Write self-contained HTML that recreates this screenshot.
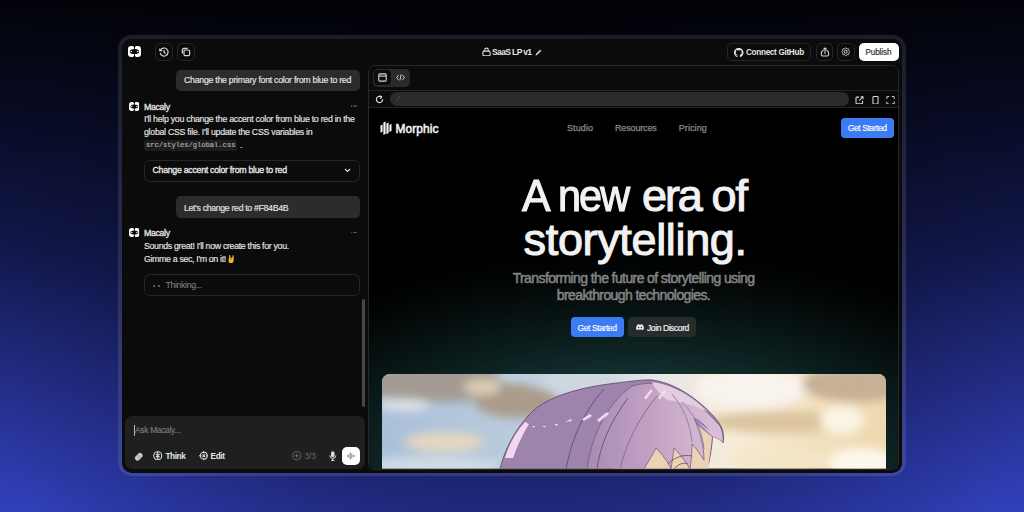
<!DOCTYPE html>
<html><head><meta charset="utf-8">
<style>
*{box-sizing:border-box;margin:0;padding:0}
html,body{width:1024px;height:512px;overflow:hidden}
body{position:relative;font-family:"Liberation Sans",sans-serif;
background:radial-gradient(ellipse 560px 520px at 512px 240px,rgba(0,0,0,.55) 0%,rgba(0,0,0,.3) 50%,rgba(0,0,0,0) 100%),radial-gradient(ellipse 300px 260px at 0px 512px,rgba(60,78,210,.3),rgba(60,78,210,0)),radial-gradient(ellipse 300px 260px at 1024px 512px,rgba(60,78,210,.3),rgba(60,78,210,0)),linear-gradient(180deg,#020308 0px,#080b24 110px,#131950 250px,#212b84 400px,#2c3aae 512px);}
.a{position:absolute}
#frame{left:118px;top:35px;width:788px;height:441px;border-radius:14px;border:4px solid rgba(255,255,255,.1);border-bottom-width:3px}
#inner{left:122px;top:39px;width:780px;height:434px;border-radius:10px;background:#0b0b0b;overflow:hidden}
.t{white-space:nowrap;line-height:1}
.ib{border:1px solid #262626;border-radius:5px}
.bub{background:#2c2c2c;border-radius:5px}
.h1{font-size:45px;color:#f2f2f2;letter-spacing:-2.1px;-webkit-text-stroke:1.1px #f2f2f2}
.txt{color:#e6e6e6;font-size:8.8px;-webkit-text-stroke:0.15px #e6e6e6}
</style></head><body>
<svg width="0" height="0" style="position:absolute"><defs>
<mask id="lm" maskUnits="userSpaceOnUse" x="0" y="0" width="13" height="11"><rect width="13" height="11" fill="#fff"/>
  <rect x="6.05" y="0" width="0.9" height="11" fill="#000"/>
  <ellipse cx="6.5" cy="5.5" rx="4.7" ry="2.6" fill="#000"/>
  <path d="M5.1 0 h2.8 l-1.4 2z M5.1 11 h2.8 l-1.4 -2z" fill="#000"/>
</mask>
<symbol id="logo" viewBox="0 0 13 11"><rect x="0" y="0" width="13" height="11" rx="3.2" fill="#fff" mask="url(#lm)"/>
  <circle cx="3.4" cy="5.5" r="0.8" fill="#fff"/><circle cx="9.6" cy="5.5" r="0.8" fill="#fff"/></symbol>
</defs></svg>
<div class="a" id="frame"></div>
<div class="a" id="inner"></div>

<!-- header -->
<svg class="a" style="left:128px;top:46px" width="13" height="11"><use href="#logo"/></svg>
<div class="a ib" style="left:155px;top:43px;width:18px;height:18px"></div>
<svg class="a" style="left:159px;top:47px" width="10" height="10" viewBox="0 0 10 10" fill="none" stroke="#d8d8d8" stroke-width="1.2"><path d="M1.5 3.2A4 4 0 1 1 1.2 6"/><path d="M5 3v2.2l1.6 1.2"/><path d="M0.8 1.5v2.2h2.2"/></svg>
<div class="a ib" style="left:177px;top:43px;width:18px;height:18px"></div>
<svg class="a" style="left:181px;top:47px" width="10" height="10" viewBox="0 0 10 10" fill="none" stroke="#d8d8d8" stroke-width="1.2"><rect x="3" y="3" width="5.6" height="5.6" rx="1.2"/><path d="M6.6 1.4h-3.6a1.6 1.6 0 0 0-1.6 1.6v3.6"/></svg>

<svg class="a" style="left:481.5px;top:46.5px" width="9" height="9.5" viewBox="0 0 9 9.5" fill="none" stroke="#dedede" stroke-width="1.1"><rect x="0.9" y="4.1" width="7.2" height="4.8" rx="1.1"/><path d="M2.7 4.1V2.9a1.8 1.8 0 0 1 3.6 0v1.2"/></svg>
<div class="a t" style="left:492px;top:47.8px;font-size:8.5px;font-weight:bold;color:#e4e4e4;letter-spacing:-0.62px">SaaS LP v1</div>
<svg class="a" style="left:535px;top:48.5px" width="7" height="7" viewBox="0 0 7 7"><path d="M0.6 6.4l0.3-1.4 3.9-3.9 1.1 1.1-3.9 3.9z" fill="#dcdcdc"/><path d="M5.2 0.7l1.1 1.1" stroke="#dcdcdc" stroke-width="0.9"/></svg>

<div class="a ib" style="left:727px;top:43px;width:84px;height:18px"></div>
<svg class="a" style="left:734px;top:47.5px" width="9.5" height="9.5" viewBox="0 0 16 16"><path fill="#e8e8e8" d="M8 0C3.58 0 0 3.58 0 8c0 3.54 2.29 6.53 5.47 7.59.4.07.55-.17.55-.38 0-.19-.01-.82-.01-1.49-2.01.37-2.53-.49-2.69-.94-.09-.23-.48-.94-.82-1.13-.28-.15-.68-.52-.01-.53.63-.01 1.08.58 1.23.82.72 1.21 1.87.87 2.33.66.07-.52.28-.87.51-1.07-1.78-.2-3.64-.89-3.640-3.95 0-.87.31-1.59.82-2.15-.08-.2-.36-1.02.08-2.12 0 0 .67-.21 2.2.82.64-.18 1.32-.27 2-.27.68 0 1.36.09 2 .27 1.53-1.04 2.200-.82 2.2-.82.44 1.1.16 1.92.08 2.12.51.56.82 1.27.82 2.15 0 3.07-1.87 3.75-3.65 3.95.29.25.54.73.54 1.48 0 1.07-.01 1.93-.01 2.2 0 .21.15.46.55.38A8.013 8.013 0 0016 8c0-4.42-3.58-8-8-8z"/></svg>
<div class="a t" style="left:746px;top:49.3px;font-size:8.2px;font-weight:bold;color:#e4e4e4;letter-spacing:-0.32px">Connect GitHub</div>
<div class="a ib" style="left:815.5px;top:43px;width:17.5px;height:18px"></div>
<svg class="a" style="left:819.5px;top:46.8px" width="10" height="10" viewBox="0 0 10 10" fill="none" stroke="#d4d4d4" stroke-width="1.05" stroke-linecap="round" stroke-linejoin="round"><path d="M3.2 3.4L1.4 4.9V7.7a1.2 1.2 0 0 0 1.2 1.2h4.8a1.2 1.2 0 0 0 1.2-1.2V4.9L6.8 3.4"/><path d="M5 6.6V0.8M3.7 2.1L5 0.8 6.3 2.1"/></svg>
<div class="a ib" style="left:837.3px;top:43px;width:17.5px;height:18px"></div>
<svg class="a" style="left:841px;top:47px" width="9.5" height="9.5" viewBox="0 0 9.5 9.5" fill="none" stroke="#d4d4d4" stroke-width="1"><path d="M4.75 0.75 L5.01 0.82 L5.24 1.01 L5.44 1.27 L5.61 1.54 L5.77 1.76 L5.94 1.89 L6.15 1.92 L6.41 1.87 L6.72 1.80 L7.05 1.76 L7.35 1.79 L7.58 1.92 L7.71 2.15 L7.74 2.45 L7.70 2.78 L7.63 3.09 L7.58 3.35 L7.61 3.56 L7.74 3.73 L7.96 3.89 L8.23 4.06 L8.49 4.26 L8.68 4.49 L8.75 4.75 L8.68 5.01 L8.49 5.24 L8.23 5.44 L7.96 5.61 L7.74 5.77 L7.61 5.94 L7.58 6.15 L7.63 6.41 L7.70 6.72 L7.74 7.05 L7.71 7.35 L7.58 7.58 L7.35 7.71 L7.05 7.74 L6.72 7.70 L6.41 7.63 L6.15 7.58 L5.94 7.61 L5.77 7.74 L5.61 7.96 L5.44 8.23 L5.24 8.49 L5.01 8.68 L4.75 8.75 L4.49 8.68 L4.26 8.49 L4.06 8.23 L3.89 7.96 L3.73 7.74 L3.56 7.61 L3.35 7.58 L3.09 7.63 L2.78 7.70 L2.45 7.74 L2.15 7.71 L1.92 7.58 L1.79 7.35 L1.76 7.05 L1.80 6.72 L1.87 6.41 L1.92 6.15 L1.89 5.94 L1.76 5.77 L1.54 5.61 L1.27 5.44 L1.01 5.24 L0.82 5.01 L0.75 4.75 L0.82 4.49 L1.01 4.26 L1.27 4.06 L1.54 3.89 L1.76 3.73 L1.89 3.56 L1.92 3.35 L1.87 3.09 L1.80 2.78 L1.76 2.45 L1.79 2.15 L1.92 1.92 L2.15 1.79 L2.45 1.76 L2.78 1.80 L3.09 1.87 L3.35 1.92 L3.56 1.89 L3.73 1.76 L3.89 1.54 L4.06 1.27 L4.26 1.01 L4.49 0.82 L4.75 0.75z"/><circle cx="4.75" cy="4.75" r="1.5"/></svg>
<div class="a" style="left:859px;top:42.5px;width:40px;height:18.5px;background:#fff;border-radius:5px"></div>
<div class="a t" style="left:865.5px;top:49.2px;font-size:8.2px;color:#333;letter-spacing:-0.15px;-webkit-text-stroke:0.2px #333">Publish</div>

<!-- chat -->
<div class="a bub" style="left:175.5px;top:69.5px;width:184.5px;height:21.5px"></div>
<div class="a t txt" style="left:184px;top:76.2px;letter-spacing:-0.28px">Change the primary font color from blue to red</div>

<svg class="a" style="left:129.2px;top:102px" width="10.6" height="9" viewBox="0 0 13 11"><use href="#logo"/></svg>
<div class="a t" style="left:144px;top:102.6px;font-size:8.8px;color:#e8e8e8;letter-spacing:-0.35px;-webkit-text-stroke:0.3px #e8e8e8">Macaly</div>
<div class="a" style="left:350.6px;top:105.2px;width:1.6px;height:1.6px;border-radius:1px;background:#5a5a5a"></div><div class="a" style="left:353.0px;top:105.2px;width:1.6px;height:1.6px;border-radius:1px;background:#5a5a5a"></div><div class="a" style="left:355.4px;top:105.2px;width:1.6px;height:1.6px;border-radius:1px;background:#5a5a5a"></div>
<div class="a txt" style="left:144px;top:113.2px;width:230px;line-height:12.8px;letter-spacing:-0.28px">I'll help you change the accent color from blue to red in the<br>global CSS file. I'll update the CSS variables in</div>
<div class="a" style="left:144px;top:139.5px;width:93px;height:11px;background:#1d1d1d;border-radius:2px"></div>
<div class="a t" style="left:146px;top:141.6px;font-family:'Liberation Mono',monospace;font-size:7.1px;color:#a8a8a8;-webkit-text-stroke:0.2px #a8a8a8">src/styles/global.css</div>
<div class="a t txt" style="left:240px;top:140.5px">.</div>

<div class="a ib" style="left:143.5px;top:159.5px;width:216.5px;height:22px;border-radius:6px"></div>
<div class="a t" style="left:152.5px;top:165.8px;font-size:8.8px;color:#eaeaea;letter-spacing:-0.29px;-webkit-text-stroke:0.3px #eaeaea">Change accent color from blue to red</div>
<svg class="a" style="left:343.5px;top:168px" width="7" height="5" viewBox="0 0 7 5" fill="none" stroke="#ddd" stroke-width="1.2"><path d="M1 1l2.5 2.5L6 1"/></svg>

<div class="a bub" style="left:175.5px;top:196px;width:184.5px;height:21.5px"></div>
<div class="a t txt" style="left:184px;top:203.5px;letter-spacing:-0.35px">Let's change red to #F84B4B</div>

<svg class="a" style="left:129.2px;top:228.3px" width="10.6" height="9" viewBox="0 0 13 11"><use href="#logo"/></svg>
<div class="a t" style="left:144px;top:229px;font-size:8.8px;color:#e8e8e8;letter-spacing:-0.35px;-webkit-text-stroke:0.3px #e8e8e8">Macaly</div>
<div class="a" style="left:350.6px;top:231.5px;width:1.6px;height:1.6px;border-radius:1px;background:#5a5a5a"></div><div class="a" style="left:353.0px;top:231.5px;width:1.6px;height:1.6px;border-radius:1px;background:#5a5a5a"></div><div class="a" style="left:355.4px;top:231.5px;width:1.6px;height:1.6px;border-radius:1px;background:#5a5a5a"></div>
<div class="a txt" style="left:144px;top:240.3px;width:230px;line-height:12.6px;letter-spacing:-0.32px">Sounds great! I'll now create this for you.<br><span style="letter-spacing:-0.34px">Gimme a sec, I'm on it!</span></div>
<svg class="a" style="left:227.5px;top:254.5px" width="7" height="8.5" viewBox="0 0 8 9.5"><path d="M1.2 0.6a0.7 0.7 0 0 1 1.4 0v3.2h0.4V2.6h0.8v1.2h0.5V2.6h0.8v1.2V0.9a0.7 0.7 0 0 1 1.4 0v5c0 2-1.2 3.4-3.2 3.4S0.6 7.9 0.6 6.4V4.6a0.6 0.6 0 0 1 0.6-0.6z" fill="#f2b42a"/><path d="M2.2 5.6c1-0.5 2-0.5 2.8 0" stroke="#b97a10" stroke-width="0.5" fill="none"/></svg>

<div class="a ib" style="left:143.5px;top:274px;width:216.5px;height:22px;border-radius:6px"></div>
<div class="a" style="left:153px;top:284.8px;width:2px;height:2px;border-radius:1px;background:#777"></div>
<div class="a" style="left:158px;top:284.8px;width:2px;height:2px;border-radius:1px;background:#777"></div>
<div class="a t" style="left:165.5px;top:280.8px;font-size:8.8px;color:#888;letter-spacing:-0.39px">Thinking...</div>

<div class="a" style="left:361.7px;top:299px;width:3px;height:108px;border-radius:2px;background:#474747"></div>

<!-- input -->
<div class="a" style="left:125px;top:416px;width:240px;height:53px;background:#1f1f1f;border-radius:7px"></div>
<div class="a" style="left:133.6px;top:424.5px;width:1px;height:11px;background:#bbb"></div>
<div class="a t" style="left:135px;top:426px;font-size:8.3px;color:#7c7c7c;letter-spacing:-0.25px;-webkit-text-stroke:0.15px #7c7c7c">Ask Macaly...</div>
<svg class="a" style="left:133.5px;top:451.5px" width="9.5" height="9.5" viewBox="0 0 9.5 9.5"><rect x="0.4" y="2.2" width="8.7" height="5.1" rx="2.55" transform="rotate(-45 4.75 4.75)" fill="#cdcdcd"/><path d="M2.9 5.2L5.2 2.9M3.6 6.1L6.1 3.6M4.5 6.8L6.8 4.5" stroke="#8a8a8a" stroke-width="0.5"/></svg>
<svg class="a" style="left:153px;top:450.5px" width="9.5" height="9.5" viewBox="0 0 10 10" fill="none" stroke="#e0e0e0" stroke-width="1.1"><circle cx="5" cy="5" r="4.2"/><path d="M5 1v8M3 3.2l2 1.6 2-1.6M3 6.6l2-1.4 2 1.4"/></svg>
<div class="a t" style="left:165.5px;top:452.6px;font-size:8.2px;font-weight:bold;color:#e8e8e8;letter-spacing:-0.4px">Think</div>
<svg class="a" style="left:198.5px;top:450.5px" width="9.5" height="9.5" viewBox="0 0 10 10" fill="none" stroke="#e0e0e0" stroke-width="1.1"><circle cx="5" cy="5" r="3.6"/><path d="M5 0v2.4M5 7.6V10M0 5h2.4M7.6 5H10M3.6 3.6l2.8 2.8M6.4 3.6L3.6 6.4"/></svg>
<div class="a t" style="left:210.5px;top:452.6px;font-size:8.2px;font-weight:bold;color:#e8e8e8;letter-spacing:-0.3px">Edit</div>
<svg class="a" style="left:292px;top:451px" width="9.5" height="9.5" viewBox="0 0 10 10" fill="none" stroke="#6a6a6a" stroke-width="1"><circle cx="5" cy="5" r="4.3"/><path d="M5 2.8v4.4M2.8 5h4.4"/></svg>
<div class="a t" style="left:304.5px;top:452px;font-size:8.3px;color:#6a6a6a;letter-spacing:-0.1px">3/3</div>
<svg class="a" style="left:329px;top:450.5px" width="7.5" height="10" viewBox="0 0 7.5 10"><rect x="2" y="0.3" width="3.5" height="6" rx="1.75" fill="#ddd"/><path d="M0.8 4.4a3 3 0 0 0 6 0M3.75 7.4V9.4M2 9.4h3.5" fill="none" stroke="#ddd" stroke-width="1"/></svg>
<div class="a" style="left:342px;top:446.8px;width:18px;height:18px;background:#fff;border-radius:5px"></div>
<svg class="a" style="left:346px;top:451px" width="10" height="10" viewBox="0 0 10 10" stroke="#666" stroke-width="0.75" stroke-linecap="round"><path d="M1.2 4.6v0.8M2.8 3.6v2.8M4.3 1.8v6.4M5.8 3v4M7.3 4.3v1.4M8.8 4.8v0.4"/></svg>

<!-- preview panel -->
<div class="a" id="pv" style="left:368px;top:64.5px;width:531px;height:405px;border:1px solid #272727;border-radius:7px;background:#0b0b0b;overflow:hidden">
</div>
<div class="a" style="left:369px;top:65.5px;width:529px;height:42px;background:#0b0b0b;border-radius:6px 6px 0 0"></div>
<div class="a" style="left:369px;top:90.3px;width:529px;height:1px;background:#242424"></div>
<div class="a" style="left:369px;top:107.2px;width:529px;height:1px;background:#242424"></div>
<div class="a" style="left:373px;top:69px;width:37px;height:17.6px;background:#2a2a2a;border-radius:5px"></div>
<div class="a" style="left:374.3px;top:70.3px;width:17px;height:15px;background:#0e0e0e;border-radius:4px"></div>
<svg class="a" style="left:378px;top:73px" width="9" height="9" viewBox="0 0 9 9" fill="none" stroke="#d8d8d8" stroke-width="1.1"><rect x="0.8" y="0.9" width="7.4" height="7.2" rx="1.1"/><path d="M0.8 3.1h7.4"/></svg>
<svg class="a" style="left:395.5px;top:74px" width="9" height="7" viewBox="0 0 9 7" fill="none" stroke="#cfcfcf" stroke-width="1"><path d="M2.4 1.2L0.7 3.5l1.7 2.3M6.6 1.2l1.7 2.3-1.7 2.3M5.1 0.5L3.9 6.5"/></svg>
<svg class="a" style="left:375px;top:95.3px" width="9" height="9" viewBox="0 0 9 9" fill="none" stroke="#dcdcdc" stroke-width="1.2" stroke-linecap="round"><path d="M7.6 4.5A3.1 3.1 0 1 1 6.2 1.9"/><path d="M5.2 0.9L6.6 1.9 5.6 3.3"/></svg>
<div class="a" style="left:390px;top:92.3px;width:458.7px;height:13.7px;background:#2b2b2b;border-radius:7px"></div>
<div class="a t" style="left:397px;top:95px;font-size:8px;color:#5a5a5a;font-style:italic">/</div>
<svg class="a" style="left:855px;top:95.5px" width="9" height="8.5" viewBox="0 0 9 9" fill="none" stroke="#d8d8d8" stroke-width="1.1"><path d="M4 1.2H1.8a1 1 0 0 0-1 1v5a1 1 0 0 0 1 1h5a1 1 0 0 0 1-1V5"/><path d="M4.2 4.8L8.2 0.8M5.6 0.8h2.6v2.6"/></svg>
<svg class="a" style="left:871.5px;top:95.5px" width="7" height="8.5" viewBox="0 0 7 9" fill="none" stroke="#d8d8d8" stroke-width="1.1"><rect x="0.8" y="0.6" width="5.4" height="7.8" rx="1"/></svg>
<svg class="a" style="left:885.5px;top:95.5px" width="9" height="8.5" viewBox="0 0 9 9" fill="none" stroke="#d8d8d8" stroke-width="1.1"><path d="M0.6 3V1.4a.8.8 0 0 1 .8-.8H3M6 .6h1.6a.8.8 0 0 1 .8.8V3M8.4 6v1.6a.8.8 0 0 1-.8.8H6M3 8.4H1.4a.8.8 0 0 1-.8-.8V6"/></svg>

<div class="a" id="hero" style="left:369px;top:108.2px;width:529px;height:360.8px;background:radial-gradient(ellipse 480px 230px at 50% 100%,#183c3b 0%,#12302f 40%,#0a1b1b 60%,#040808 82%,#000 95%);"></div>
<svg class="a" style="left:380px;top:121px" width="12" height="14.5" viewBox="0 0 12 14.5" fill="#f6f6f6"><path d="M0.5 4.6l2.1-1.1v7.2l-2.1 1.1z"/><path d="M3.4 1.5l2.2-1.1v12.4l-2.2 1.1z"/><path d="M6.4 2.6l2.2-1.1v10.6l-2.2 1.1z"/><path d="M9.4 3.9l2.1-1.1v7.2l-2.1 1.1z"/></svg>
<div class="a t" style="left:395.5px;top:123.6px;font-size:11.9px;color:#f2f2f2;letter-spacing:0.1px;-webkit-text-stroke:0.55px #f2f2f2">Morphic</div>
<div class="a t" style="left:567px;top:124.3px;font-size:9px;color:#8a8a8a;letter-spacing:0.1px;-webkit-text-stroke:0.25px #8a8a8a">Studio</div>
<div class="a t" style="left:615px;top:124.3px;font-size:9px;color:#8a8a8a;letter-spacing:-0.15px;-webkit-text-stroke:0.25px #8a8a8a">Resources</div>
<div class="a t" style="left:678.7px;top:124.3px;font-size:9px;color:#8a8a8a;letter-spacing:0.1px;-webkit-text-stroke:0.25px #8a8a8a">Pricing</div>
<div class="a" style="left:841.3px;top:118.2px;width:53px;height:19.7px;background:#3b7cf5;border-radius:4px"></div>
<div class="a t" style="left:847.7px;top:124px;font-size:8.6px;color:#f4f6ff;letter-spacing:-0.45px;-webkit-text-stroke:0.2px #f4f6ff">Get Started</div>

<div class="a t h1" style="left:522px;top:173.2px;transform:scaleX(0.95);transform-origin:0 0">A</div>
<div class="a t h1" style="left:558.2px;top:173.2px;transform:scaleX(0.92);transform-origin:0 0">new</div>
<div class="a t h1" style="left:642px;top:173.2px">era</div>
<div class="a t h1" style="left:711.6px;top:173.2px;letter-spacing:-1px">of</div>
<div class="a t h1" style="left:523.6px;top:217.4px;letter-spacing:-0.35px">storytelling.</div>
<div class="a t" style="left:369px;width:529px;top:270px;text-align:center;font-size:14px;color:#858585;line-height:17.2px;letter-spacing:-0.6px;-webkit-text-stroke:0.5px #858585">Transforming the future of storytelling using<br>breakthrough technologies.</div>
<div class="a" style="left:571px;top:317.2px;width:53px;height:20px;background:#3b7cf5;border-radius:4px"></div>
<div class="a t" style="left:577.5px;top:323.7px;font-size:8.6px;color:#f4f6ff;letter-spacing:-0.45px;-webkit-text-stroke:0.2px #f4f6ff">Get Started</div>
<div class="a" style="left:628.3px;top:317.2px;width:67.3px;height:20px;background:#262c2c;border-radius:4px"></div>
<svg class="a" style="left:635.5px;top:324px" width="8" height="6.5" viewBox="0 0 16 12"><path fill="#e8e8e8" d="M13.5 1A13 13 0 0 0 10.3 0l-.4.8a12 12 0 0 0-3.8 0L5.7 0A13 13 0 0 0 2.5 1C.5 4 0 7 .2 9.9A13 13 0 0 0 4.2 12l.8-1.3a8 8 0 0 1-1.3-.6l.3-.2a9.4 9.4 0 0 0 8 0l.3.2a8 8 0 0 1-1.3.6l.8 1.3a13 13 0 0 0 4-2.1C16.1 6.5 15.4 3.6 13.5 1zM5.3 8.1c-.8 0-1.4-.7-1.4-1.6S4.5 5 5.3 5s1.5.7 1.4 1.6c0 .8-.6 1.5-1.4 1.5zm5.4 0c-.8 0-1.4-.7-1.4-1.6S9.9 5 10.7 5s1.4.7 1.4 1.6c0 .8-.6 1.5-1.4 1.5z"/></svg>
<div class="a t" style="left:647px;top:323.7px;font-size:8.6px;color:#eeeeee;letter-spacing:-0.45px;-webkit-text-stroke:0.2px #eeeeee">Join Discord</div>

<svg class="a" id="img" style="left:381.5px;top:374px" width="504" height="94.5" viewBox="0 0 504 94.5">
<defs>
<clipPath id="ic"><path d="M0 94.5V8a8 8 0 0 1 8-8h488a8 8 0 0 1 8 8v86.5z"/></clipPath>
<linearGradient id="sky" x1="0" x2="1" y1="0" y2="0">
<stop offset="0" stop-color="#a9c0d9"/><stop offset="0.3" stop-color="#bdcddd"/><stop offset="0.55" stop-color="#e6e6ea"/><stop offset="0.7" stop-color="#f6ecd8"/><stop offset="0.85" stop-color="#f3e1c0"/><stop offset="1" stop-color="#eed8b0"/></linearGradient>
<filter id="bl" x="-20%" y="-50%" width="140%" height="200%"><feGaussianBlur stdDeviation="5"/></filter>
<filter id="bl2" x="-20%" y="-50%" width="140%" height="200%"><feGaussianBlur stdDeviation="2.5"/></filter>
<linearGradient id="bangs" x1="205" x2="341" y1="0" y2="0" gradientUnits="userSpaceOnUse"><stop offset="0" stop-color="#a98bb3"/><stop offset="0.5" stop-color="#c3a3c4"/><stop offset="1" stop-color="#dcc0d8"/></linearGradient>
<linearGradient id="hair" x1="0" x2="1" y1="0" y2="0"><stop offset="0" stop-color="#9c80ab"/><stop offset="0.55" stop-color="#a486b0"/><stop offset="0.8" stop-color="#c9a7c9"/><stop offset="1" stop-color="#dcbcd6"/></linearGradient>
</defs>
<g clip-path="url(#ic)">
<rect width="504" height="95" fill="url(#sky)"/>
<g filter="url(#bl)">
<ellipse cx="60" cy="9" rx="85" ry="19" fill="#a39b93"/>
<ellipse cx="22" cy="31" rx="26" ry="6" fill="#dfe3e6"/>
<ellipse cx="135" cy="28" rx="42" ry="16" fill="#aa9c8a"/>
<ellipse cx="135" cy="3" rx="22" ry="6" fill="#c4d4e2"/>
<ellipse cx="100" cy="13" rx="18" ry="8" fill="#ddcdb4"/>
<ellipse cx="200" cy="8" rx="40" ry="12" fill="#cfd8e0"/>
<ellipse cx="62" cy="68" rx="40" ry="10" fill="#e4d7c0"/>
<ellipse cx="50" cy="92" rx="70" ry="10" fill="#cfdbe4"/>
<ellipse cx="370" cy="14" rx="55" ry="22" fill="#f8f3ec"/>
<ellipse cx="475" cy="10" rx="55" ry="18" fill="#c6b096"/>
<ellipse cx="400" cy="48" rx="75" ry="11" fill="#dcc49e"/>
<ellipse cx="460" cy="46" rx="22" ry="14" fill="#fbf4e4"/>
<ellipse cx="480" cy="88" rx="35" ry="14" fill="#fdf8ee"/>
<ellipse cx="400" cy="85" rx="50" ry="10" fill="#f4e6c8"/>
</g>
<path d="M118 95C122 78 132 55 152 36C170 21 200 13 235 9C250 7 262 5.5 270 6C285 8 300 15 314 26C328 37 338 48 340.5 56C342 62 341.5 67 341 68.5C337 65 333 62 330.5 62.5C330 72 328 84 326.5 90L320 95z" fill="#9e83ad" stroke="#56445f" stroke-width="0.8"/>
<path d="M232 95C238 70 250 48 262 30L300 40C315 50 326 60 330 63C329 75 327 86 326 95z" fill="#ead2b4"/>
<path d="M236 95C240 75 246 60 254 46L258 60C256 72 254 84 252 95z" fill="#c9a98c"/>
<path d="M205 95C210 60 225 30 250 12C265 8 280 8 292 14C310 24 326 38 338 52C341 58 341.5 64 341 68.5C337 65 333 62 330.5 62.5C327 55 320 48 312 44C318 58 322 72 322 86C318 80 314 74 310 70C310 80 309 88 308 95C304 88 298 80 292 74C291 82 290 88 289 95C286 88 280 80 274 74C270 82 266 88 262 95z" fill="url(#bangs)" stroke="#6a5478" stroke-width="0.7"/>
<path d="M270 8C290 10 310 22 326 38C315 32 300 28 285 26C278 20 272 14 270 8z" fill="#e6cce0"/>
<path d="M312 44C320 52 330 58 338 64L341 68.5C337 65 333 62 330.5 62.5z" fill="#dcc0d8"/>
<g fill="none" stroke="#5a4868" stroke-width="0.8">
<path d="M184 95C190 65 200 40 222 15"/>
<path d="M215 95C218 72 228 48 246 24"/>
<path d="M286 90C292 84 300 80 310 82"/>
<path d="M238 95C244 70 256 45 275 22" stroke="#7a6488"/>
<path d="M300 28C312 40 320 55 322 75" stroke="#8a7498"/>
<path d="M290 20C302 34 308 50 310 68" stroke="#8a7498"/>
<path d="M292 95C296 90 302 88 306 90"/>
</g>
<g fill="#f6dcf4" opacity="0.95">
<path d="M123 84C127 70 134 58 143 48L147 50C141 60 135 72 131 84z"/>
<path d="M150 52h3l-1 2z M160 52h4l-1 1.5z M172 50h4l-1 2z M183 48l6-3 1 2z M200 45l8-5 2 2-8 5z M215 46l10-8 2 2-10 8z"/>
<path d="M262 24l7 -9 2 1.5 -7 9z M276 24l6 -8 2 1.5 -6 8z"/>
</g>
</g>
</svg>

</body></html>
